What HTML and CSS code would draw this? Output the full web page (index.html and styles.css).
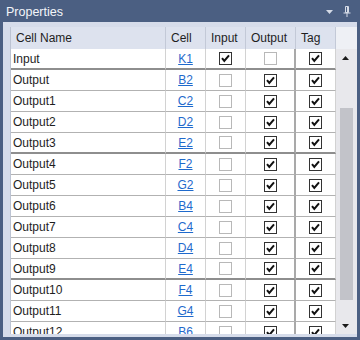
FILE: index.html
```html
<!DOCTYPE html>
<html>
<head>
<meta charset="utf-8">
<link rel="stylesheet" href="styles.css">
</head>
<body>
<div class="panel">
  <div class="titlebar">
    <span class="title">Properties</span>
    <span class="title-icons">
      <svg class="ico-drop" width="7" height="4" viewBox="0 0 7 4"><path d="M0 0H7L3.5 4Z" fill="#d4dae6"/></svg>
      <svg class="ico-pin" width="8" height="11" viewBox="0 0 8 11"><path d="M2.5 0.5H5.5V6.5H2.5Z" fill="none" stroke="#d4dae6"/><path d="M0.5 7H7.5" stroke="#d4dae6"/><path d="M4 7V11" stroke="#d4dae6"/><path d="M4.5 1V6" stroke="#d4dae6"/></svg>
    </span>
  </div>
  <div class="body">
    <div class="grid-wrap">
      <div class="grid">
        <div class="hc">Cell Name</div><div class="hc">Cell</div><div class="hc">Input</div><div class="hc">Output</div><div class="hc last">Tag</div>
      </div>
      <div class="grid rows" id="rows"></div>
    </div>
    <div class="scroll">
      <div class="scroll-head"></div>
      <div class="track">
        <div class="sbtn"><svg width="7" height="4" viewBox="0 0 7 4"><path d="M0 4H7L3.5 0Z" fill="#1a1a1a"/></svg></div>
        <div class="gap-top"></div>
        <div class="thumb"></div>
        <div class="gap-bot"></div>
        <div class="sbtn"><svg width="7" height="4" viewBox="0 0 7 4"><path d="M0 0H7L3.5 4Z" fill="#1a1a1a"/></svg></div>
      </div>
    </div>
  </div>
</div>
<script src="app.js"></script>
</body>
</html>
```
FILE: app.js
```js
var data = [
  ["Input","K1",1,0,1],
  ["Output","B2",0,1,1],
  ["Output1","C2",0,1,1],
  ["Output2","D2",0,1,1],
  ["Output3","E2",0,1,1],
  ["Output4","F2",0,1,1],
  ["Output5","G2",0,1,1],
  ["Output6","B4",0,1,1],
  ["Output7","C4",0,1,1],
  ["Output8","D4",0,1,1],
  ["Output9","E4",0,1,1],
  ["Output10","F4",0,1,1],
  ["Output11","G4",0,1,1],
  ["Output12","B6",0,1,1]
];
var check = '<svg width="11" height="11" viewBox="0 0 11 11"><path d="M2 5.2L4.3 8L9 2.3" fill="none" stroke="#111" stroke-width="2"/></svg>';
function cb(v){ return '<span class="cb' + (v ? ' on' : '') + '">' + (v ? check : '') + '</span>'; }
var html = '';
data.forEach(function(r, i){
  var cls = (i === 0 || i === 4 || i === 10) ? ' thick' : '';
  html += '<div class="dc name' + cls + '">' + r[0] + '</div>' +
          '<div class="dc cell' + cls + '"><a href="#">' + r[1] + '</a></div>' +
          '<div class="dc chk c-in' + cls + '">' + cb(r[2]) + '</div>' +
          '<div class="dc chk c-out' + cls + '">' + cb(r[3]) + '</div>' +
          '<div class="dc chk c-tag' + cls + '">' + cb(r[4]) + '</div>';
});
document.getElementById('rows').innerHTML = html;
```
FILE: styles.css
```css
* { box-sizing: border-box; }
html, body { margin: 0; padding: 0; background: #4b5f82; }
body { font-family: "Liberation Sans", Arial, sans-serif; font-size: 12px; color: #1e1e1e; }
.panel {
  width: 360px; height: 340px; background: #4b5f82;
  padding: 0 3px 3px 3px; display: flex; flex-direction: column;
}
.titlebar {
  height: 22px; flex: none; display: flex; align-items: center;
  padding: 0 6px 0 3px; color: #f4f6fa; font-size: 12.5px;
}
.title { flex: 1; padding-top: 1px; }
.title-icons { display: flex; align-items: center; gap: 10px; }
.ico-drop { margin-top: 1px; }
.body {
  flex: 1; min-height: 0; background: #d6dcea;
  display: flex; padding: 5px 0 3px 7px;
}
.grid-wrap {
  width: 326px; overflow: hidden; border-left: 1px solid #bcc3d2;
  display: flex; flex-direction: column;
}
.grid {
  display: grid;
  grid-template-columns: 155px 40px 40px 50px 40px;
  grid-auto-rows: 21px;
}
.grid:first-child { grid-auto-rows: 22px; }
.hc {
  background: #dde2ee; border-right: 1px solid #c3c9d7;
  padding-left: 5px; line-height: 22px; color: #1e1e1e;
  white-space: nowrap;
}
.hc.last { border-right: 1px solid #c3c9d7; }
.dc {
  background: #fff; border-bottom: 1px solid #b2b2b2; border-right: 1px solid #d2d2d2;
  line-height: 20px; white-space: nowrap; overflow: hidden;
}
.dc.thick { border-bottom: 2px solid #8e8e8e; }
.name { padding-left: 2px; color: #1e1e1e; }
.cell { text-align: center; }
.cell a { color: #1f6acc; text-decoration: underline; }
.c-out { border-right: 2px solid #a9a9a9; }
.chk { display: flex; align-items: center; justify-content: center; }
.cb {
  width: 13px; height: 13px; border: 1px solid #b8b8b8; background: #fff;
  display: flex; align-items: center; justify-content: center;
}
.cb.on { border: 1.5px solid #333; }
.scroll { width: 21px; display: flex; flex-direction: column; }
.scroll-head { height: 22px; background: #eef0f5; flex: none; }
.track { flex: 1; background: #e8e8ec; display: flex; flex-direction: column; }
.sbtn { height: 17px; flex: none; display: flex; align-items: center; justify-content: center; padding-right: 2px; }
.gap-top { height: 42px; flex: none; }
.thumb { height: 192px; flex: none; background: #c2c3c9; margin: 0 4px 0 4px; }
.gap-bot { flex: 1; }
```
